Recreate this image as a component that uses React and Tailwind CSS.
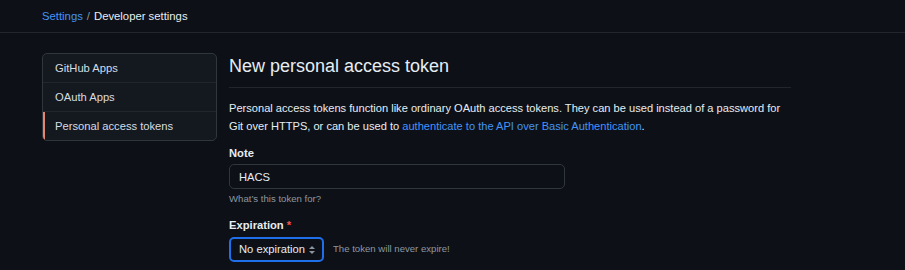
export default function App() {
  return (
    <div
      className="min-h-[270px] bg-[#0d1117] text-[#e6edf3]"
      style={{ fontFamily: "'Liberation Sans', Arial, sans-serif" }}
    >
      <div className="flex h-[33px] items-center border-b border-[#21262d] px-[42px] text-[11.3px]">
        <a className="text-[#4493f8]">Settings</a>
        <span className="mx-[4px] text-[#8d96a0]">/</span>
        <span className="text-[#e6edf3]">Developer settings</span>
      </div>

      <div className="flex gap-[12px] px-[42px] pt-[20px]">
        <nav className="w-[175px] shrink-0 self-start overflow-hidden rounded-[5px] border border-[#30363d] bg-[#141920] text-[11.2px] text-[#d6dce2]">
          <a className="block border-b border-[#21262d] px-[12px] py-[7px] leading-[14px]">GitHub Apps</a>
          <a className="block border-b border-[#21262d] px-[12px] py-[7px] leading-[14px]">OAuth Apps</a>
          <a className="block border-l-2 border-[#e5876a] px-[10px] py-[7px] leading-[14px]">
            Personal access tokens
          </a>
        </nav>

        <main className="w-[562px]">
          <h1 className="border-b border-[#21262d] pb-[9px] pt-[2px] text-[18px] font-normal leading-[23px]">
            New personal access token
          </h1>
          <p className="mt-[11px] text-[11.1px] leading-[18px]">
            Personal access tokens function like ordinary OAuth access tokens. They can be used instead of a password for
            Git over HTTPS, or can be used to{" "}
            <a className="text-[#4493f8]">authenticate to the API over Basic Authentication</a>.
          </p>

          <div className="mt-[10px]">
            <label className="block text-[11.2px] font-bold leading-[16px]">Note</label>
            <input
              readOnly
              value="HACS"
              className="mt-[3px] block h-[25px] w-[336px] rounded-[5px] border border-[#30363d] bg-[#0d1117] px-[9px] text-[11.2px] text-[#e6edf3] outline-none"
            />
            <p className="mt-[3px] text-[9.6px] leading-[14px] text-[#8d96a0]">What’s this token for?</p>
          </div>

          <div className="mt-[11px]">
            <label className="block text-[11.2px] font-bold leading-[16px]">
              Expiration <span className="text-[#f85149]">*</span>
            </label>
            <div className="mt-[4px] flex items-center gap-[9px]">
              <div className="flex h-[25px] w-[95px] items-center justify-between whitespace-nowrap rounded-[5px] border-2 border-[#1f6feb] bg-[#0d1117] pl-[8px] pr-[6px] text-[11.2px]">
                <span>No expiration</span>
                <svg width="8" height="10" viewBox="0 0 8 10" fill="#8d96a0">
                  <path d="M4 1 L7 4 H1 Z" />
                  <path d="M4 9 L7 6 H1 Z" />
                </svg>
              </div>
              <span className="text-[9.6px] text-[#8d96a0]">The token will never expire!</span>
            </div>
          </div>
        </main>
      </div>
    </div>
  );
}
